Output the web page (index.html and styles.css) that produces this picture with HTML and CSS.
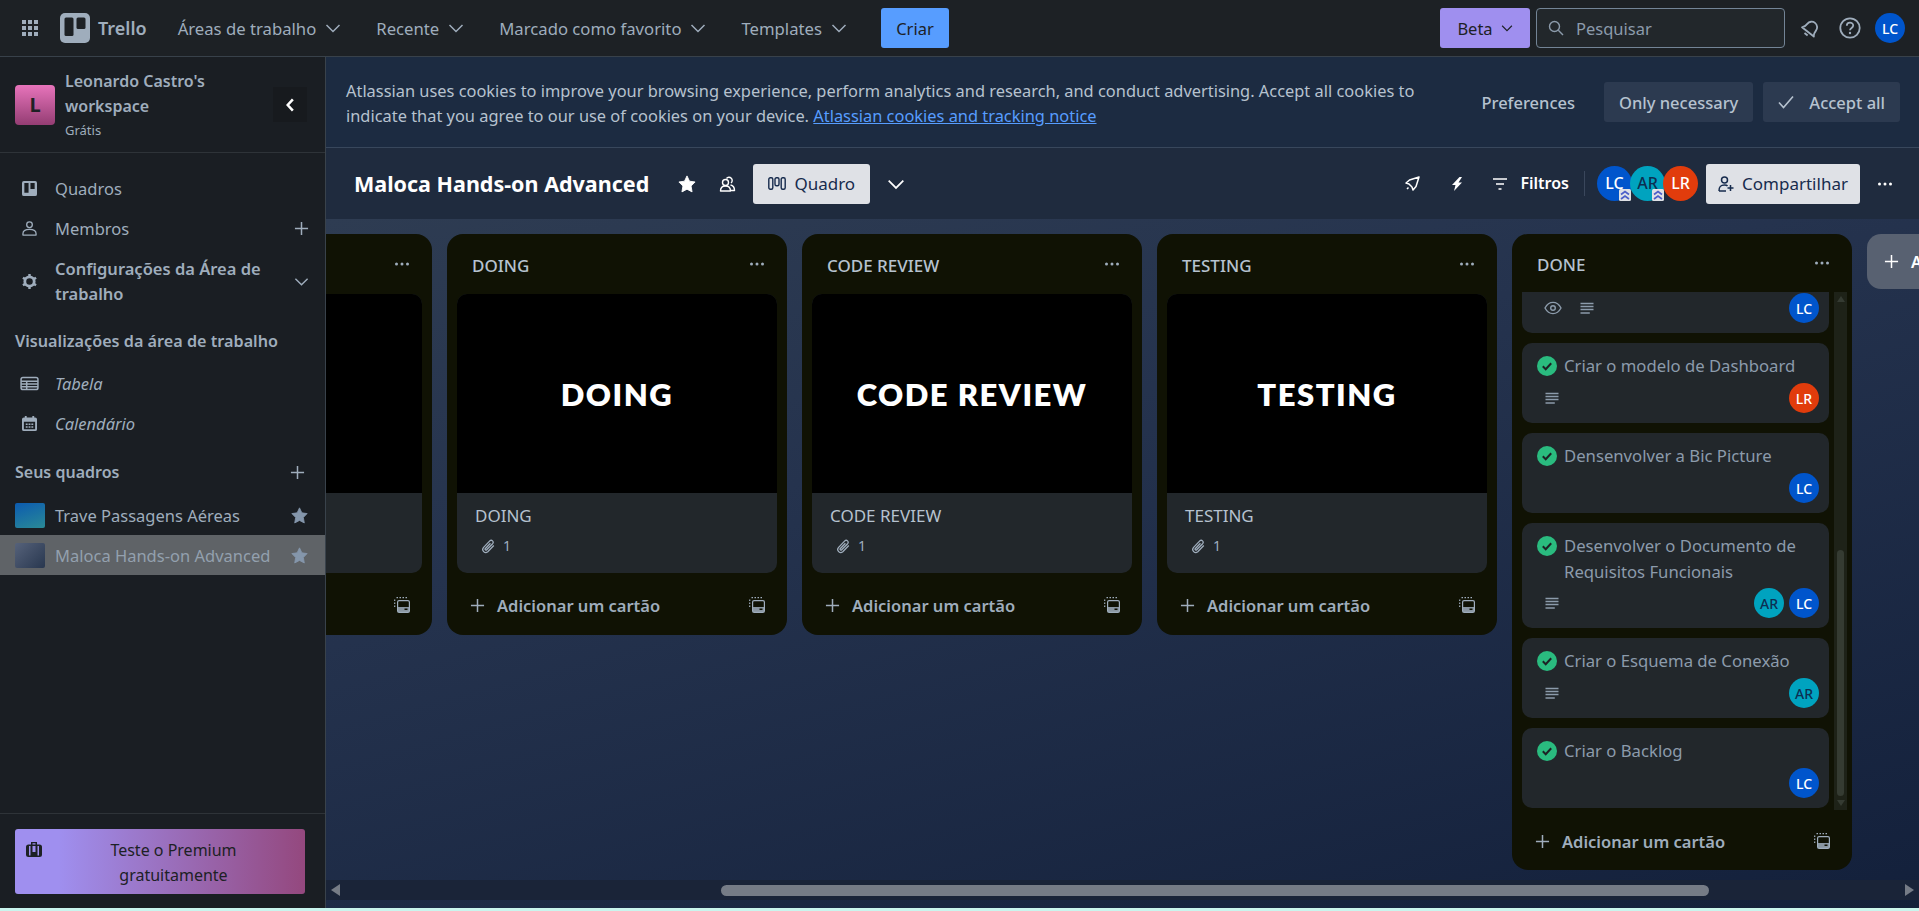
FILE: index.html
```html
<!doctype html>
<html lang=pt-BR>
<head>
	<title>Maloca Hands-on Advanced | Trello</title>
	<link rel="stylesheet" href="styles.css">
</head>

<body>
	<svg class=defs width=0 height=0>
		<symbol id=i-chevron viewBox="0 0 16 16"><path d="M1.500 5l6.500 6.500L14.500 5" fill=none stroke=currentColor stroke-width=1.500 /></symbol>
		<symbol id=i-plus viewBox="0 0 16 16"><path d="M8 1v14M1 8h14" fill=none stroke=currentColor stroke-width=1.600 /></symbol>
		<symbol id=i-star viewBox="0 0 16 16"><path d="M8 .8l2.200 4.700 5 .7-3.600 3.600.9 5.200L8 12.600 3.500 15l.9-5.200L.8 6.200l5-.7z" fill=currentColor stroke=currentColor stroke-width=.8 stroke-linejoin=round /></symbol>
		<symbol id=i-dots viewBox="0 0 16 16"><circle cx=2.500 cy=8 r=1.500 fill=currentColor /><circle cx=8 cy=8 r=1.500 fill=currentColor /><circle cx=13.500 cy=8 r=1.500 fill=currentColor /></symbol>
		<symbol id=i-template viewBox="0 0 16 16"><path d="M.7 2.500v1.500M.7 5.500v1.500M.7 8.500v1.500M2.500 .7h1.500M5.500 .7h1.500M8.500 .7h1.500M11.500 .7h1.500" fill=none stroke=currentColor stroke-width=1.200 /><rect x=3.600 y=3.600 width=11.800 height=11.800 rx=1.500 fill=none stroke=currentColor stroke-width=1.200 /><rect x=4 y=10 width=11 height=5 fill=currentColor opacity=.85 /><rect x=10.500 y=11.500 width=3 height=1.500 fill=#101204 /></symbol>
		<symbol id=i-lines viewBox="0 0 16 14"><path d="M1 1.500h14M1 4.800h14M1 8.100h14M1 11.800h10" fill=none stroke=currentColor stroke-width=1.600 /></symbol>
		<symbol id=i-clip viewBox="0 0 16 16"><path d="M13.800 7.500l-6 6.200c-2.800 2.500-6.800-1.200-4.200-4.300l6.200-6.500c1.800-1.800 4.500.8 2.800 2.800L6.700 11.800c-.9.900-2.200-.3-1.300-1.300l5-5.200" fill=none stroke=currentColor stroke-width=1.300 /></symbol>
		<symbol id=i-check viewBox="0 0 20 20"><circle cx=10 cy=10 r=10 fill=#2abb7f /><path d="M5.800 10.300l2.900 2.900 5.500-6" fill=none stroke=#1d2125 stroke-width=2 /></symbol>
		<symbol id=i-badge viewBox="0 0 12 12"><rect width=12 height=12 rx=1.500 fill=#dfe1e6 /><path d="M2 5.500l4-3 4 3M2 10l4-3 4 3" fill=none stroke=#4c5fc9 stroke-width=1.700 /></symbol>
	</svg>

	<header class=top-bar>
		<svg class=apps viewBox="0 0 18 18"><path d="M1 1h4v4H1zM7 1h4v4H7zM13 1h4v4h-4zM1 7h4v4H1zM7 7h4v4H7zM13 7h4v4h-4zM1 13h4v4H1zM7 13h4v4H7zM13 13h4v4h-4z" fill=currentColor /></svg>
		<svg class=logo viewBox="0 0 30 30"><rect width=30 height=30 rx=5 fill=#9fadbc /><rect x=4.500 y=4.500 width=9 height=18.500 rx=1.500 fill=#1d2125 /><rect x=16.500 y=4.500 width=9 height=11.500 rx=1.500 fill=#1d2125 /></svg>
		<span class=logo-name>Trello</span>
		<nav class=top-nav>
			<a class=top-link>Áreas de trabalho <svg class=ico-s><use href=#i-chevron /></svg></a>
			<a class=top-link>Recente <svg class=ico-s><use href=#i-chevron /></svg></a>
			<a class=top-link>Marcado como favorito <svg class=ico-s><use href=#i-chevron /></svg></a>
			<a class=top-link>Templates <svg class=ico-s><use href=#i-chevron /></svg></a>
		</nav>
		<button class=create>Criar</button>
		<span class=spacer></span>
		<button class=beta>Beta <svg class=ico-xs><use href=#i-chevron /></svg></button>
		<label class=search>
			<svg class=ico-m viewBox="0 0 16 16"><circle cx=6.500 cy=6.500 r=5 fill=none stroke=currentColor stroke-width=1.400 /><path d="M10.300 10.300l4.700 4.700" stroke=currentColor stroke-width=1.400 /></svg>
			Pesquisar
		</label>
		<svg class=bell viewBox="0 0 20 20"><g transform="rotate(38 10 10)"><path d="M2.500 15c1.500-1.500 2-3 2-6a5.500 5.500 0 0111 0c0 3 .5 4.500 2 6z" fill=none stroke=currentColor stroke-width=1.800 stroke-linejoin=round /><path d="M8 18h4" stroke=currentColor stroke-width=1.800 /></g></svg>
		<svg class=help viewBox="0 0 22 22"><circle cx=11 cy=11 r=9.700 fill=none stroke=currentColor stroke-width=1.800 /><path d="M7.800 8.800c0-4.200 6.400-4 6.400-.3 0 2.500-3.200 2.300-3.200 4.800" fill=none stroke=currentColor stroke-width=1.800 /><circle cx=11 cy=16 r=1.200 fill=currentColor /></svg>
		<span class="avatar blue">LC</span>
	</header>

	<div class=main>
		<aside class=sidebar>
			<div class=workspace>
				<span class=workspace-icon>L</span>
				<div class=workspace-info>
					<div class=workspace-name>Leonardo Castro's workspace</div>
					<div class=workspace-plan>Grátis</div>
				</div>
				<button class=collapse><svg viewBox="0 0 10 14"><path d="M7.500 2L3 7l4.500 5" fill=none stroke=currentColor stroke-width=2.200 /></svg></button>
			</div>
			<div class=side-scroll>
				<a class="side-item first">
					<svg class=side-icon viewBox="0 0 16 16"><path fill-rule=evenodd d="M2 0h12a2 2 0 012 2v12a2 2 0 01-2 2H2a2 2 0 01-2-2V2a2 2 0 012-2zm.5 2v10.500h4.500V2zm6.500 0v6.500h4.500V2z" fill=currentColor /></svg>
					Quadros
				</a>
				<a class=side-item>
					<svg class=side-icon viewBox="0 0 16 16"><circle cx=8 cy=4 r=3 fill=none stroke=currentColor stroke-width=1.400 /><path d="M1 15v-1.500C1 10 4 9 8 9s7 1 7 4.500V15z" fill=none stroke=currentColor stroke-width=1.400 stroke-linejoin=round /></svg>
					<span class=side-label>Membros</span>
					<svg class=side-action><use href=#i-plus /></svg>
				</a>
				<a class="side-item settings">
					<svg class=side-icon viewBox="0 0 16 16"><circle cx=8 cy=8 r=5 fill=none stroke=currentColor stroke-width=3 /><path d="M8 0v3M8 13v3M1 4l2.500 1.500M12.500 10.500L15 12M1 12l2.500-1.500M12.500 5.500L15 4" stroke=currentColor stroke-width=2.600 /></svg>
					<span class=side-label>Configurações da Área de trabalho</span>
					<svg class=side-action><use href=#i-chevron /></svg>
				</a>
				<h3 class=side-title>Visualizações da área de trabalho</h3>
				<a class="side-item view">
					<svg class=side-icon-w viewBox="0 0 20 16"><rect x=1 y=1.500 width=18 height=13 rx=2 fill=none stroke=currentColor stroke-width=1.600 /><path d="M1 5.500h18M1 8.500h18M1 11.500h18M7 5.500v9" stroke=currentColor stroke-width=1.600 /></svg>
					<em>Tabela</em>
				</a>
				<a class="side-item view">
					<svg class=side-icon viewBox="0 0 16 16"><path fill-rule=evenodd d="M3 0h2v1.500h6V0h2v1.500h1a2 2 0 012 2V14a2 2 0 01-2 2H2a2 2 0 01-2-2V3.500a2 2 0 012-2h1zM2 6v8h12V6zm2 2h2v1.500H4zm3 0h2v1.500H7zm3 0h2v1.500h-2zm-6 3h2v1.500H4zm3 0h2v1.500H7zm3 0h2v1.500h-2z" fill=currentColor /></svg>
					<em>Calendário</em>
				</a>
				<div class=boards-head>
					<h3>Seus quadros</h3>
					<svg class=side-action><use href=#i-plus /></svg>
				</div>
				<a class=board-link>
					<span class="board-thumb thumb-blue"></span>
					<span class=side-label>Trave Passagens Aéreas</span>
					<svg class=board-star><use href=#i-star /></svg>
				</a>
				<a class="board-link current">
					<span class="board-thumb thumb-slate"></span>
					<span class=side-label>Maloca Hands-on Advanced</span>
					<svg class=board-star><use href=#i-star /></svg>
				</a>
			</div>
			<div class=side-foot>
				<button class=premium>
					<svg viewBox="0 0 16 15"><path fill-rule=evenodd d="M5 0h6v2.500h2.500A2.500 2.500 0 0116 5v7.500a2.500 2.500 0 01-2.500 2.500h-11A2.500 2.500 0 010 12.500V5a2.500 2.500 0 012.500-2.500H5zm1.500 1.200v1.300h3V1.200zM3 4v9.500h1.500V4zm3.500 0v6h3V4zm5 0v9.500H13V4z" fill=currentColor /></svg>
					<span>Teste o Premium gratuitamente</span>
				</button>
			</div>
		</aside>

		<div class=content>
			<section class=cookies>
				<p>Atlassian uses cookies to improve your browsing experience, perform analytics and research, and conduct advertising. Accept all cookies to indicate that you agree to our use of cookies on your device. <a>Atlassian cookies and tracking notice</a></p>
				<button class="cookie-btn plain">Preferences</button>
				<button class=cookie-btn>Only necessary</button>
				<button class=cookie-btn><svg class=ico-m viewBox="0 0 16 16"><path d="M1 8.500l4.500 5L15 2.500" fill=none stroke=currentColor stroke-width=1.600 /></svg> Accept all</button>
			</section>

			<section class=board-bar>
				<h1>Maloca Hands-on Advanced</h1>
				<svg class=bar-star><use href=#i-star /></svg>
				<svg class=bar-vis viewBox="0 0 16 16"><circle cx=6 cy=6.500 r=3 fill=none stroke=currentColor stroke-width=1.400 /><path d="M7 2.500a3.200 3.200 0 114.500 4.500M1 15c0-3.500 2-5 5-5s5 1.500 5 5zM11 9c2.500.5 4 2.500 4 5.500h-4" fill=none stroke=currentColor stroke-width=1.400 stroke-linejoin=round /></svg>
				<button class=light-btn><svg class=board-ico viewBox="0 0 18 13"><rect x=.8 y=.8 width=4 height=11.400 rx=1.500 fill=none stroke=currentColor stroke-width=1.400 /><rect x=7 y=.8 width=4 height=8 rx=1.500 fill=none stroke=currentColor stroke-width=1.400 /><rect x=13.200 y=.8 width=4 height=11.400 rx=1.500 fill=none stroke=currentColor stroke-width=1.400 /></svg> Quadro</button>
				<svg class=bar-chevron><use href=#i-chevron /></svg>
				<span class=spacer></span>
				<svg class=bar-rocket viewBox="0 0 16 16"><path d="M15 1L5.500 4 2 7l3 1 3 3 1 3 3-3.500zM4.500 11.500L3 13" fill=none stroke=currentColor stroke-width=1.500 stroke-linejoin=round /></svg>
				<svg class=bar-bolt viewBox="0 0 12 14"><path d="M8.500 0L1 8h3.500L3 14l8-8.500H7.500L11 0z" fill=currentColor /></svg>
				<svg class=bar-filter viewBox="0 0 14 12"><path d="M0 1h14M3 6h8M5.500 11h3" fill=none stroke=currentColor stroke-width=1.700 /></svg>
				<span class=filters>Filtros</span>
				<div class=members>
					<span class="avatar big blue">LC<svg class=badge><use href=#i-badge /></svg></span>
					<span class="avatar big teal">AR<svg class=badge><use href=#i-badge /></svg></span>
					<span class="avatar big red">LR</span>
				</div>
				<button class="light-btn share"><svg class=ico-m viewBox="0 0 16 16"><circle cx=6.500 cy=4 r=3 fill=none stroke=currentColor stroke-width=1.500 /><path d="M1 15c0-4 1-6 5.500-6 1.500 0 2.500.3 3 1M1 15h7M12.500 9v6M9.500 12h6" fill=none stroke=currentColor stroke-width=1.500 /></svg> Compartilhar</button>
				<svg class="ico-m bar-dots"><use href=#i-dots /></svg>
			</section>

			<section class=canvas>
				<div class=lists>
					<!-- scrolled mostly out of view, only its right edge shows -->
					<article class=list>
						<div class=list-head><span class=list-name></span><svg class=ico-m><use href=#i-dots /></svg></div>
						<div class=cards>
							<div class=card>
								<div class=card-cover></div>
								<div class=card-body></div>
							</div>
						</div>
						<div class=list-foot><span class=add-card></span><svg class=ico-m><use href=#i-template /></svg></div>
					</article>
					<article class=list>
						<div class=list-head><span class=list-name>DOING</span><svg class=ico-m><use href=#i-dots /></svg></div>
						<div class=cards>
							<div class=card>
								<div class=card-cover>DOING</div>
								<div class=card-body><div class=card-title>DOING</div><div class=card-meta><svg class=ico-m><use href=#i-clip /></svg> 1</div></div>
							</div>
						</div>
						<div class=list-foot><svg class=plus-ico><use href=#i-plus /></svg><span class=add-card>Adicionar um cartão</span><svg class=ico-m><use href=#i-template /></svg></div>
					</article>
					<article class=list>
						<div class=list-head><span class=list-name>CODE REVIEW</span><svg class=ico-m><use href=#i-dots /></svg></div>
						<div class=cards>
							<div class=card>
								<div class=card-cover>CODE REVIEW</div>
								<div class=card-body><div class=card-title>CODE REVIEW</div><div class=card-meta><svg class=ico-m><use href=#i-clip /></svg> 1</div></div>
							</div>
						</div>
						<div class=list-foot><svg class=plus-ico><use href=#i-plus /></svg><span class=add-card>Adicionar um cartão</span><svg class=ico-m><use href=#i-template /></svg></div>
					</article>
					<article class=list>
						<div class=list-head><span class=list-name>TESTING</span><svg class=ico-m><use href=#i-dots /></svg></div>
						<div class=cards>
							<div class=card>
								<div class=card-cover>TESTING</div>
								<div class=card-body><div class=card-title>TESTING</div><div class=card-meta><svg class=ico-m><use href=#i-clip /></svg> 1</div></div>
							</div>
						</div>
						<div class=list-foot><svg class=plus-ico><use href=#i-plus /></svg><span class=add-card>Adicionar um cartão</span><svg class=ico-m><use href=#i-template /></svg></div>
					</article>
					<article class="list done">
						<div class=list-head><span class=list-name>DONE</span><svg class=ico-m><use href=#i-dots /></svg></div>
						<div class=done-wrap>
							<div class=done-cards>
								<div class=task>
									<div class=task-foot>
										<svg class=eye viewBox="0 0 18 14"><path d="M1 7c4-7.500 12-7.500 16 0-4 7.500-12 7.500-16 0z" fill=none stroke=currentColor stroke-width=1.400 /><circle cx=9 cy=7 r=2.300 fill=none stroke=currentColor stroke-width=1.400 /></svg>
										<svg class=lines><use href=#i-lines /></svg>
										<span class=spacer></span>
										<span class="avatar blue">LC</span>
									</div>
								</div>
								<div class=task>
									<div class=task-title><svg class=check><use href=#i-check /></svg>Criar o modelo de Dashboard</div>
									<div class=task-foot>
										<svg class=lines><use href=#i-lines /></svg>
										<span class=spacer></span>
										<span class="avatar red">LR</span>
									</div>
								</div>
								<div class=task>
									<div class=task-title><svg class=check><use href=#i-check /></svg>Densenvolver a Bic Picture</div>
									<div class=task-foot>
										<span class=spacer></span>
										<span class="avatar blue">LC</span>
									</div>
								</div>
								<div class=task>
									<div class=task-title><svg class=check><use href=#i-check /></svg>Desenvolver o Documento de Requisitos Funcionais</div>
									<div class=task-foot>
										<svg class=lines><use href=#i-lines /></svg>
										<span class=spacer></span>
										<span class="avatar teal">AR</span>
										<span class="avatar blue">LC</span>
									</div>
								</div>
								<div class=task>
									<div class=task-title><svg class=check><use href=#i-check /></svg>Criar o Esquema de Conexão</div>
									<div class=task-foot>
										<svg class=lines><use href=#i-lines /></svg>
										<span class=spacer></span>
										<span class="avatar teal">AR</span>
									</div>
								</div>
								<div class=task>
									<div class=task-title><svg class=check><use href=#i-check /></svg>Criar o Backlog</div>
									<div class=task-foot>
										<span class=spacer></span>
										<span class="avatar blue">LC</span>
									</div>
								</div>
							</div>
							<div class=done-scroll>
								<i class=arrow-up></i>
								<i class=done-thumb></i>
								<i class=arrow-down></i>
							</div>
						</div>
						<div class=list-foot><svg class=plus-ico><use href=#i-plus /></svg><span class=add-card>Adicionar um cartão</span><svg class=ico-m><use href=#i-template /></svg></div>
					</article>
					<button class=add-list><svg class=plus-ico><use href=#i-plus /></svg>A</button>
				</div>
				<div class=h-scroll>
					<i class=arrow-left></i>
					<div class=h-track><i class=h-thumb></i></div>
					<i class=arrow-right></i>
				</div>
			</section>
		</div>
	</div>
	<div class=strip></div>
</body>
</html>
```

FILE: styles.css
```css
html, body {
	width: 100%;
	height: 100%;
	margin: 0;
	overflow: hidden;
}

body {
	display: flex;
	flex-direction: column;
	background: #1d2125;
	color: #b6c2cf;
	font: 16.5px/25px "Noto Sans", "Open Sans", sans-serif;
}

button {
	font: inherit;
	border: 0;
	display: flex;
	align-items: center;
	justify-content: center;
}

h1, h3, p {margin: 0}
.defs {position: absolute}
.spacer {flex-grow: 1}
svg {flex-shrink: 0}

.ico-xs {width: 12px; height: 12px}
.ico-s {width: 16px; height: 16px; margin-left: 9px}
.ico-m {width: 16px; height: 16px}

.avatar {
	display: flex;
	align-items: center;
	justify-content: center;
	flex-shrink: 0;
	width: 30px;
	height: 30px;
	border-radius: 50%;
	font-size: 14px;
	font-weight: 500;
	position: relative;

	&.blue {background: #0055cc; color: #fff}
	&.teal {background: #00a3bf; color: #0c2f52}
	&.red {background: #e13c0c; color: #fff}
	&.big {width: 35px; height: 35px; font-size: 16px}
}

.badge {
	position: absolute;
	right: 1px;
	bottom: 0;
	width: 12px;
	height: 12px;
}

/* top bar */
.top-bar {
	display: flex;
	align-items: center;
	height: 56px;
	flex-shrink: 0;
	border-bottom: 1px solid #38414a;
	padding: 0 14px 0 21px;
	color: #9fadbc;
}

.apps {width: 18px; height: 18px}
.logo {width: 30px; height: 30px; margin-left: 21px}

.logo-name {
	font-size: 18px;
	font-weight: 600;
	margin-left: 8px;
}

.top-nav {
	display: flex;
	gap: 35px;
	margin-left: 31px;
	font-size: 16.700px;
}

.top-link {
	display: flex;
	align-items: center;
	white-space: nowrap;
}

.create {
	width: 68px;
	height: 40px;
	margin-left: 34px;
	border-radius: 3px;
	background: #579dff;
	color: #1d2125;
}

.beta {
	gap: 8px;
	width: 90px;
	height: 40px;
	border-radius: 3px;
	background: #9f8fef;
	color: #1d2125;
}

.search {
	display: flex;
	align-items: center;
	gap: 12px;
	width: 249px;
	height: 40px;
	box-sizing: border-box;
	margin-left: 6px;
	padding-left: 11px;
	border: 1px solid #738496;
	border-radius: 4px;
	background: #22272b;
	color: #8c9bab;
}

.bell {width: 20px; height: 20px; margin-left: 16px}
.help {width: 22px; height: 22px; margin: 0 14px 0 18px}

/* sidebar */
.main {
	display: flex;
	flex-grow: 1;
	min-height: 0;
}

.sidebar {
	display: flex;
	flex-direction: column;
	width: 325px;
	flex-shrink: 0;
	border-right: 1px solid #39424b;
	background: #1a1e23;
	color: #9fadbc;
}

.workspace {
	display: flex;
	align-items: center;
	gap: 10px;
	height: 95px;
	flex-shrink: 0;
	border-bottom: 1px solid #2e3338;
	padding: 0 18px 0 15px;
}

.workspace-icon {
	display: flex;
	align-items: center;
	justify-content: center;
	width: 40px;
	height: 40px;
	border-radius: 4px;
	background: linear-gradient(#e774bb, #943d73);
	color: #1d2125;
	font-size: 20px;
	font-weight: 700;
}

.workspace-info {flex-grow: 1; width: 0}

.workspace-name {
	font-size: 16px;
	font-weight: 600;
	color: #9fadbc;
}

.workspace-plan {font-size: 13px; line-height: 22px}

.collapse {
	width: 34px;
	height: 35px;
	background: #171a1e;
	color: #fff;
	padding: 0;

	& svg {width: 12px; height: 16px}
}

.side-scroll {flex-grow: 1}

.side-item {
	display: flex;
	align-items: center;
	min-height: 40px;
	padding: 0 16px 0 22px;
	gap: 18px;

	&.first {margin-top: 15px}
	&.settings {font-weight: 600; height: 50px; margin-top: 8px}
	&.view {height: 40px}
}

.side-icon {width: 15px; height: 15px}
.side-icon-w {width: 19px; height: 15px; margin: 0 -2px}
.side-label {flex-grow: 1; width: 0}
.side-action {width: 15px; height: 15px}

.side-title {
	font-size: 16.200px;
	font-weight: 600;
	padding: 23px 15px 9px;
}

.boards-head {
	display: flex;
	align-items: center;
	justify-content: space-between;
	padding: 17px 20px 10px 15px;

	& h3 {font-size: 16px; font-weight: 600}
}

.board-link {
	display: flex;
	align-items: center;
	gap: 10px;
	height: 40px;
	padding: 0 17px 0 15px;
	white-space: nowrap;

	&.current {background: #5f6367; color: #93a0ae}
}

.board-thumb {
	width: 30px;
	height: 25px;
	flex-shrink: 0;
	border-radius: 2px;

	&.thumb-blue {background: linear-gradient(160deg, #0c5bb0, #2a8a96)}
	&.thumb-slate {background: linear-gradient(135deg, #56627a, #28374f)}
}

.board-star {width: 17px; height: 17px; color: #8496ab}

.side-foot {
	height: 95px;
	flex-shrink: 0;
	box-sizing: border-box;
	border-top: 1px solid #2e3338;
	padding: 15px 20px 0 15px;
}

.premium {
	width: 100%;
	height: 65px;
	padding: 0 14px 0 11px;
	border-radius: 3px;
	align-items: flex-start;
	background: linear-gradient(90deg, #9f8fef 15%, #94487e);
	color: #1d2125;
	font-size: 16px;

	& svg {width: 16px; height: 15px; margin-top: 13px}
	& span {flex-grow: 1; padding: 9px 23px 0 37px; text-align: center}
}

/* cookie banner */
.content {
	display: flex;
	flex-direction: column;
	flex-grow: 1;
	min-width: 0;
}

.cookies {
	display: flex;
	align-items: center;
	height: 91px;
	flex-shrink: 0;
	box-sizing: border-box;
	border-bottom: 1px solid #38475c;
	padding: 0 19px 0 20px;
	gap: 10px;
	background: #1c2b41;

	& p {flex-grow: 1; width: 0; margin-right: 36px; padding-top: 2px; font-size: 16.400px}
	& a {color: #579dff; text-decoration: underline}
}

.cookie-btn {
	gap: 15px;
	height: 40px;
	padding: 0 15px;
	border-radius: 3px;
	background: #2c3a50;
	color: #b6c2cf;
	font-size: 16.500px;
	font-weight: 500;
	white-space: nowrap;

	&.plain {background: none; margin-right: 4px}
}

/* board header */
.board-bar {
	display: flex;
	align-items: center;
	height: 71px;
	flex-shrink: 0;
	box-sizing: border-box;
	padding: 0 26px 0 28px;
	background: #1f2b3e;
	color: #fff;

	& h1 {font-size: 21.500px; font-weight: 700; white-space: nowrap}
}

.bar-star {width: 18px; height: 18px; margin-left: 29px}
.bar-vis {width: 17px; height: 16px; margin-left: 23px}
.bar-chevron {width: 18px; height: 18px; margin-left: 17px}
.bar-rocket {width: 16px; height: 16px}
.bar-bolt {width: 12px; height: 14px; margin-left: 31px}
.bar-filter {width: 14px; height: 12px; margin-left: 30px}
.board-ico {width: 18px; height: 13px}

.filters {
	font-size: 16px;
	font-weight: 600;
	margin-left: 13px;
	padding-right: 15px;
	border-right: 1px solid #3a475c;
}

.light-btn {
	gap: 8px;
	width: 117px;
	height: 40px;
	margin-left: 17px;
	border-radius: 3px;
	background: #dfe1e6;
	color: #172b4d;
	font-size: 17px;

	&.share {width: 154px; margin-left: 8px}
}

.bar-dots {margin-left: 17px}

.members {
	display: flex;
	margin-left: 12px;

	& .avatar + .avatar {margin-left: -2px}
}

/* lists */
.canvas {
	display: flex;
	flex-direction: column;
	flex-grow: 1;
	min-height: 0;
	overflow: hidden;
	background: linear-gradient(165deg, #2e3c52 0%, #25334e 35%, #13203b 100%);
}

.lists {
	display: flex;
	align-items: flex-start;
	gap: 15px;
	flex-grow: 1;
	min-height: 0;
	padding-top: 15px;
	margin-left: -234px;
}

.list {
	display: flex;
	flex-direction: column;
	flex-shrink: 0;
	width: 340px;
	border-radius: 16px;
	background: #101204;
}

.list-head {
	display: flex;
	align-items: center;
	justify-content: space-between;
	height: 60px;
	padding: 0 22px 0 25px;
	box-sizing: border-box;
	color: #9fadbc;
}

.list-name {font-size: 17px; font-weight: 500; color: #b6c2cf; padding-top: 2px}

.cards {padding: 0 10px}

.card {
	border-radius: 10px;
	background: #22272b;
	overflow: hidden;
}

.card-cover {
	display: flex;
	align-items: center;
	justify-content: center;
	height: 199px;
	background: #000;
	color: #fff;
	font: 800 31px "Lato", sans-serif;
	letter-spacing: 1.500px;
}

.card-body {
	height: 80px;
	box-sizing: border-box;
	padding: 10px 18px 0;
}

.card-title {font-size: 17px}

.card-meta {
	display: flex;
	align-items: center;
	gap: 7px;
	height: 35px;
	padding-left: 5px;
	font-size: 14px;
	color: #9fadbc;
}

.list-foot {
	display: flex;
	align-items: center;
	height: 62px;
	padding: 2px 22px 0 23px;
	box-sizing: border-box;
	color: #9fadbc;
}

.plus-ico {width: 15px; height: 15px; margin-right: 12px}
.add-card {flex-grow: 1; font-weight: 600}

.done {
	& .list-head {height: 58px}
	& .list-foot {height: 60px}
}

.done-wrap {
	display: flex;
	height: 518px;
	padding: 0 5px 0 10px;
	gap: 5px;
}

.done-cards {
	display: flex;
	flex-direction: column;
	justify-content: flex-end;
	gap: 10px;
	flex-grow: 1;
	padding-bottom: 2px;
	overflow: hidden;
}

.task {
	display: flex;
	flex-direction: column;
	flex-shrink: 0;
	min-height: 80px;
	box-sizing: border-box;
	border-radius: 10px;
	background: #22272b;
	padding: 10px 10px 10px 15px;
	color: #8c9bab;
	justify-content: flex-end;
	font-size: 16.700px;
}

.task-title {
	flex-grow: 1;
	line-height: 26px;
	padding-left: 27px;
	margin-bottom: 3px;
	text-indent: -27px;
}

.check {
	width: 20px;
	height: 20px;
	margin-right: 7px;
	vertical-align: -4px;
}

.task-foot {
	display: flex;
	align-items: center;
	gap: 5px;
	height: 30px;
	padding-left: 7px;
	flex-shrink: 0;
}

.eye {width: 18px; height: 14px; margin-right: 12px}
.lines {width: 16px; height: 13px}

.done-scroll {
	display: flex;
	flex-direction: column;
	align-items: center;
	width: 13px;
	flex-shrink: 0;
	background: #1e2218;
}

.done-thumb {
	width: 7px;
	height: 246px;
	margin-top: auto;
	border-radius: 4px;
	background: #353b32;
}

.arrow-up, .arrow-down {
	width: 0;
	height: 0;
	margin: 4px 0;
	border: 4px solid transparent;
	border-width: 0 4px 6px;
	border-bottom-color: #353b32;
}

.arrow-down {
	border-width: 6px 4px 0;
	border-top-color: #353b32;
}

.add-list {
	width: 52px;
	height: 55px;
	flex-shrink: 0;
	justify-content: flex-start;
	padding-left: 17px;
	border-radius: 14px 0 0 14px;
	background: #586171;
	color: #fff;
	font-weight: 600;
	white-space: nowrap;
}

/* horizontal scrollbar */
.h-scroll {
	display: flex;
	align-items: center;
	flex-shrink: 0;
	height: 20px;
	margin-bottom: 8px;
	background: #1a2438;
}

.h-track {
	flex-grow: 1;
	padding-left: 376px;
	padding-right: 191px;
}

.h-thumb {
	display: block;
	height: 11px;
	border-radius: 6px;
	background: #767c86;
}

.arrow-left, .arrow-right {
	width: 0;
	height: 0;
	margin: 0 5px;
	border: 6px solid transparent;
	border-width: 6px 9px 6px 0;
	border-right-color: #767c86;
}

.arrow-right {
	border-width: 6px 0 6px 9px;
	border-left-color: #767c86;
}

.strip {
	height: 3px;
	flex-shrink: 0;
	background: #c9f5ee;
}
```
